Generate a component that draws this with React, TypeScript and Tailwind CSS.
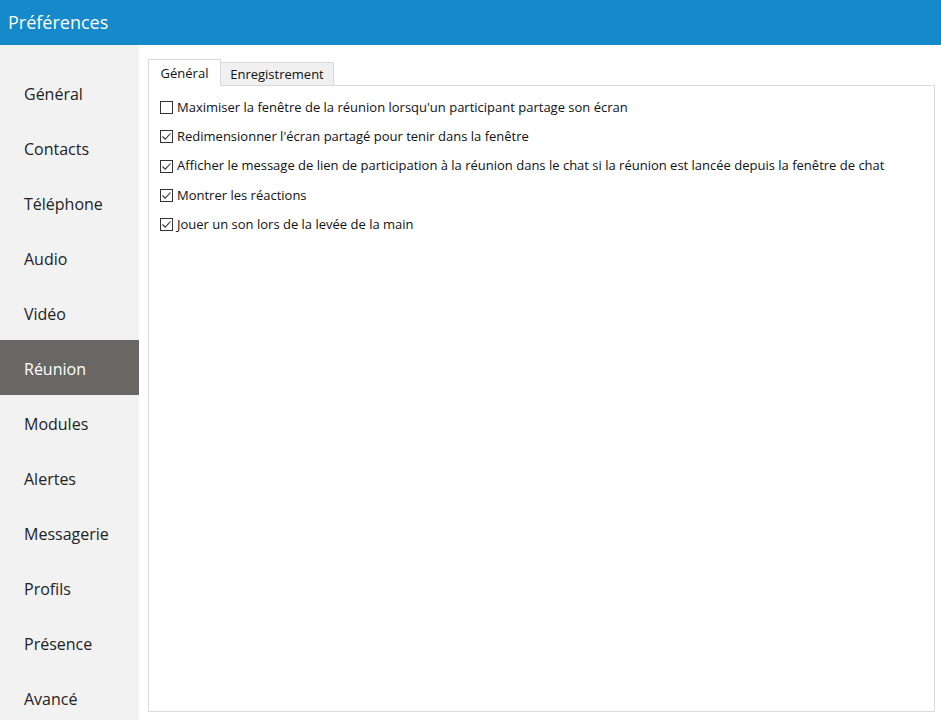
import React from "react";

const nav = ["Général","Contacts","Téléphone","Audio","Vidéo","Réunion","Modules","Alertes","Messagerie","Profils","Présence","Avancé"];
const opts: [string, boolean][] = [
  ["Maximiser la fenêtre de la réunion lorsqu'un participant partage son écran", false],
  ["Redimensionner l'écran partagé pour tenir dans la fenêtre", true],
  ["Afficher le message de lien de participation à la réunion dans le chat si la réunion est lancée depuis la fenêtre de chat", true],
  ["Montrer les réactions", true],
  ["Jouer un son lors de la levée de la main", true],
];

function Box({ checked }: { checked: boolean }) {
  return (
    <span className="w-[13px] h-[13px] border border-[#333] bg-white flex items-center justify-center shrink-0">
      {checked && (
        <svg width="11" height="11" viewBox="0 0 11 11">
          <path d="M1.5 5.5 L4.2 8.2 L9.5 2.5" fill="none" stroke="#333" strokeWidth="1.1" />
        </svg>
      )}
    </span>
  );
}

export default function App() {
  return (
    <div className="w-[941px] h-[720px] overflow-hidden flex flex-col bg-white" style={{ fontFamily: '"Open Sans", "Noto Sans", sans-serif' }}>
      <div className="h-[45px] bg-[#1589c9] text-white text-[18px] flex items-center pl-[8px] shrink-0">Préférences</div>
      <div className="flex flex-1 min-h-0">
        <div className="w-[139px] bg-[#f2f2f2] pt-[20px] shrink-0">
          {nav.map((n) => (
            <div key={n} className={`h-[55px] flex items-center pl-[24px] pt-[3px] text-[16px] ${n === "Réunion" ? "bg-[#696764] text-white" : "text-[#222]"}`}>{n}</div>
          ))}
        </div>
        <div className="flex-1 pl-[9px] pr-[6px] pt-[14px] pb-[8px] flex flex-col">
          <div className="flex items-end h-[27px] relative z-10">
            <div className="h-[27px] w-[73px] border border-[#d9d9d9] border-b-0 bg-white text-[13px] text-[#111] flex items-center justify-center pt-[2px]">Général</div>
            <div className="h-[24px] w-[113px] border border-[#d9d9d9] border-l-0 bg-[#f0f0f0] text-[13px] text-[#111] flex items-center justify-center pt-[2px]">Enregistrement</div>
          </div>
          <div className="flex-1 border border-[#d9d9d9] -mt-px pt-[13px] pl-[11px] flex flex-col gap-[12.25px]">
            {opts.map(([t, c]) => (
              <div key={t} className="flex items-center gap-[4px] h-[17px] text-[13px] text-[#111]">
                <Box checked={c} />
                <span className="whitespace-nowrap">{t}</span>
              </div>
            ))}
          </div>
        </div>
      </div>
    </div>
  );
}
